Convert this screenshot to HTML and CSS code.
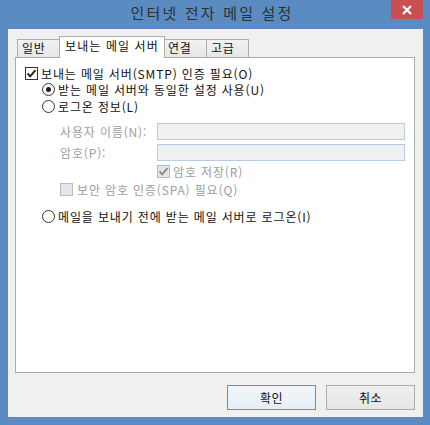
FILE: index.html
```html
<!DOCTYPE html>
<html lang="ko">
<head>
    <meta charset="utf-8">
    <title>인터넷 전자 메일 설정</title>
    <link rel="stylesheet" href="styles.css">
</head>
<body>

<div class="window">
    <div class="titlebar">
        <span class="title">인터넷 전자 메일 설정</span>
        <div class="close">
            <svg width="12" height="10" viewBox="0 0 12 10">
                <path d="M2 1 L10 9 M10 1 L2 9" stroke="#fff" stroke-width="2.2" fill="none"/>
            </svg>
        </div>
    </div>

    <div class="client">
        <!-- Tabs -->
        <div class="tabs">
            <div class="tab tab-general">일반</div>
            <div class="tab tab-active">보내는 메일 서버</div>
            <div class="tab tab-connect">연결</div>
            <div class="tab tab-advanced">고급</div>
        </div>

        <div class="panel">
            <div class="row row-auth">
                <span class="check">
                    <svg width="11" height="11" viewBox="0 0 11 11"><path d="M1.5 5.5 L4.2 8.3 L9.5 2.2" stroke="#262626" stroke-width="2" fill="none"/></svg>
                </span>
                <span>보내는 메일 서버(SMTP) 인증 필요(O)</span>
            </div>
            <div class="row row-radio">
                <span class="radio selected"></span>
                <span>받는 메일 서버와 동일한 설정 사용(U)</span>
            </div>
            <div class="row row-radio">
                <span class="radio"></span>
                <span>로그온 정보(L)</span>
            </div>

            <div class="row row-field row-user">
                <span class="field-label">사용자 이름(N):</span>
                <span class="field-input"></span>
            </div>
            <div class="row row-field row-pass">
                <span class="field-label">암호(P):</span>
                <span class="field-input"></span>
            </div>

            <div class="row row-remember disabled">
                <span class="check check-disabled">
                    <svg width="11" height="11" viewBox="0 0 11 11"><path d="M1.5 5.5 L4.2 8.3 L9.5 2.2" stroke="#8c8c8c" stroke-width="2" fill="none"/></svg>
                </span>
                <span>암호 저장(R)</span>
            </div>
            <div class="row row-spa disabled">
                <span class="check check-disabled"></span>
                <span>보안 암호 인증(SPA) 필요(Q)</span>
            </div>

            <div class="row row-radio row-logon">
                <span class="radio"></span>
                <span>메일을 보내기 전에 받는 메일 서버로 로그온(I)</span>
            </div>
        </div>

        <div class="actions">
            <div class="btn btn-default">확인</div>
            <div class="btn">취소</div>
        </div>
    </div>
</div>

</body>
</html>
```

FILE: styles.css
```css
body {
    margin: 0;
    font-family: "Noto Sans CJK KR", "Noto Sans", sans-serif;
    font-size: 12px;
    color: #111;
}
.window {
    width: 430px;
    height: 425px;
    box-sizing: border-box;
    background-color: #5a8cc1;
    padding: 0 7px 8px 8px;
    display: flex;
    flex-direction: column;
}
.titlebar {
    height: 29px;
    position: relative;
    display: flex;
    justify-content: center;
    align-items: center;
}
.title {
    font-size: 15px;
    color: #2f2f2f;
    letter-spacing: 2.2px;
    margin-top: -5px;
    margin-left: -7px;
}
.close {
    position: absolute;
    top: 0;
    right: 0;
    width: 32px;
    height: 19px;
    background-color: #c75050;
    display: flex;
    justify-content: center;
    align-items: center;
}
.client {
    flex: 1;
    background-color: #f0f0f0;
    padding: 7px 8px 7px 7px;
    display: flex;
    flex-direction: column;
}

/* Tabs */
.tabs {
    height: 22px;
    display: flex;
    align-items: flex-end;
    padding-left: 2px;
    margin-bottom: -1px;
    position: relative;
    z-index: 1;
}
.tab {
    box-sizing: border-box;
    height: 19px;
    border: 1px solid #acacac;
    background: linear-gradient(#f2f2f2, #e6e6e6);
    padding-left: 4px;
    line-height: 16px;
    white-space: nowrap;
    letter-spacing: 0.8px;
}
.tab-general {
    width: 44px;
}
.tab-active {
    width: 106px;
    height: 22px;
    margin: 0 -2px;
    background: #fff;
    border-bottom: none;
    padding-left: 5px;
    line-height: 17px;
    letter-spacing: 1.1px;
    position: relative;
    z-index: 2;
}
.tab-connect {
    width: 44px;
}
.tab-advanced {
    width: 43px;
    margin-left: -1px;
}

/* Panel */
.panel {
    height: 316px;
    box-sizing: border-box;
    background-color: #fff;
    border: 1px solid #acacac;
    padding: 7px 8px 0 9px;
    display: flex;
    flex-direction: column;
}
.row {
    display: flex;
    align-items: center;
    height: 17px;
    white-space: nowrap;
    letter-spacing: 0.85px;
}
.row-auth {
    height: 16px;
}
.row-radio {
    margin-left: 17px;
}
.row-field {
    margin-left: 35px;
    color: #9d9d9d;
}
.row-user {
    margin-top: 8px;
}
.row-pass {
    margin-top: 4px;
}
.field-label {
    width: 97px;
}
.field-input {
    box-sizing: border-box;
    width: 248px;
    height: 17px;
    background-color: #f0f0f0;
    border: 1px solid #b7cbe3;
}
.disabled {
    color: #9d9d9d;
}
.row-remember {
    margin-top: 2px;
    margin-left: 132px;
}
.row-spa {
    margin-top: 1px;
    margin-left: 35px;
}
.row-logon {
    margin-top: 10px;
}

.check {
    box-sizing: border-box;
    width: 13px;
    height: 13px;
    border: 1px solid #333;
    background-color: #fff;
    margin-right: 3px;
    flex-shrink: 0;
}
.check svg {
    display: block;
}
.check-disabled {
    border-color: #bcbcbc;
    background-color: #e6e6e6;
}
.row-spa .check {
    margin-right: 4px;
}
.radio {
    box-sizing: border-box;
    width: 13px;
    height: 13px;
    border: 1px solid #333;
    border-radius: 50%;
    background-color: #fff;
    margin-right: 3px;
    flex-shrink: 0;
    display: flex;
    justify-content: center;
    align-items: center;
}
.radio.selected::after {
    content: "";
    width: 5px;
    height: 5px;
    border-radius: 50%;
    background-color: #1e1e1e;
}

/* Buttons */
.actions {
    display: flex;
    justify-content: flex-end;
    gap: 10px;
    margin-top: 12px;
    height: 25px;
}
.btn {
    box-sizing: border-box;
    width: 89px;
    height: 25px;
    border: 1px solid #acacac;
    background: linear-gradient(#f0f0f0, #e5e5e5);
    display: flex;
    justify-content: center;
    align-items: center;
    letter-spacing: 0.5px;
}
.btn-default {
    border-color: #3c9af0;
    background: linear-gradient(#f2f6fb, #e6edf5);
}
```
